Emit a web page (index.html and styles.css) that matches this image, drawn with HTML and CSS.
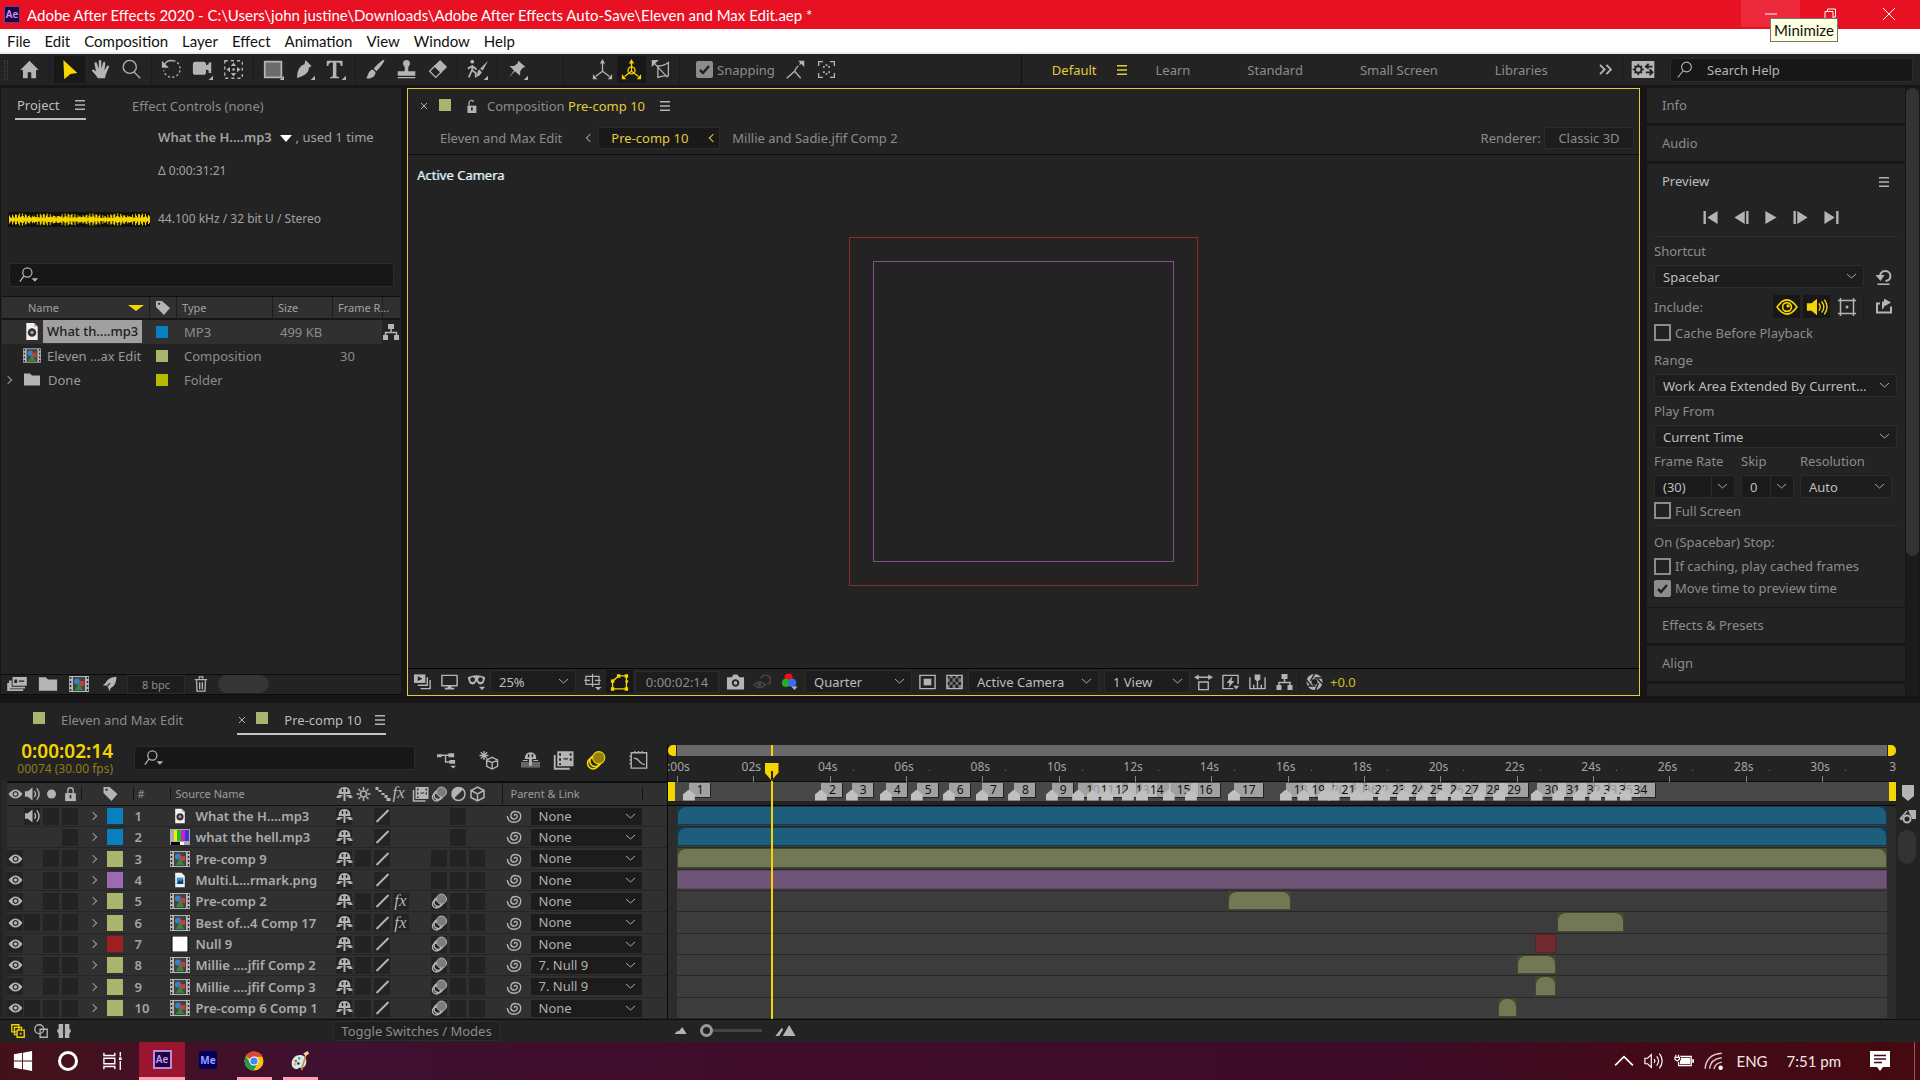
FILE: index.html
```html
<!DOCTYPE html>
<html lang="en">
<head>
<meta charset="utf-8">
<title>Adobe After Effects 2020</title>
<link rel="stylesheet" href="styles.css">
</head>
<body>
<svg class="sprite" aria-hidden="true">
  <symbol id="home" viewBox="0 0 24 24"><path d="M12 2 1.500 12.500H4.500V22H10V15H14V22H19.500V12.500H22.500Z"/></symbol>
  <symbol id="arrow" viewBox="0 0 24 24"><path d="M5 1 21 16 13 17 6 23Z"/></symbol>
  <symbol id="hand" viewBox="0 0 24 24"><path d="M9 22C7 18 4 16 2 13c1-2 3-1 5 1.500L5 5c1-2 2.500-1 3 0l2 6V2c1-1.500 2.500-1 3 0v9l2-7c1-1.500 2.500-.5 2.500 1L16.500 13l3-5c1-1.200 2.500-.4 2.200 1L18 18l-1 4Z"/></symbol>
  <symbol id="zoom" viewBox="0 0 24 24"><g class="line"><circle cx="10" cy="9" r="7.500"/><path d="m15 15 7 7"/></g></symbol>
  <symbol id="rotate" viewBox="0 0 24 24"><g class="line"><path d="M4 6a9.500 9.500 0 0 1 10-4"/><path stroke-dasharray="2.500 2.500" d="M14 2a9.500 9.500 0 1 1-11 11"/></g><path d="M1 2v8h8Z"/></symbol>
  <symbol id="camera" viewBox="0 0 24 24"><path d="M1 6q0-3 3-3h9q3 0 3 3v1l3-1V4h3v12h-3v-3l-3-1v3q0 3-3 3H4q-3 0-3-3Z"/><path d="M24 19v5h-5Z"/></symbol>
  <symbol id="panbehind" viewBox="0 0 24 24"><g class="line"><path stroke-dasharray="3.500 3.500" d="M2 2h20v20H2Z"/></g><path d="m12 4 3 4H9zM12 20l3-4H9zM4 12l4-3v6zM20 12l-4-3v6z"/><circle cx="12" cy="12" r="1.500"/></symbol>
  <symbol id="rect" viewBox="0 0 24 24"><path fill="#6c6c6c" stroke="#b4b4b4" stroke-width="2" d="M2 3h19v18H2Z"/><path d="M24 19v5h-5Z"/></symbol>
  <symbol id="pen" viewBox="0 0 24 24"><path d="m13 1 7 7-3 2c0 6-5 9-14 12L8.500 15a2 2 0 1 1 1.300 1.300L3.500 21C4 13 6 8 12 6Z"/><path d="M24 19v5h-5Z"/></symbol>
  <symbol id="type" viewBox="0 0 24 24"><path d="M2 2h18v6h-2c0-3-1-4-5-4v15q0 1.500 3 1.500V22H6v-1.500q3 0 3-1.500V4C5 4 4 5 4 8H2Z"/><path d="M24 19v5h-5Z"/></symbol>
  <symbol id="brush" viewBox="0 0 24 24"><path d="M22 1c1 1-5 9-9 13l-3-3C14 6 21 0 22 1ZM9 12l3 3c0 5-5 8-11 7 3-2 2-9 8-10Z"/></symbol>
  <symbol id="stamp" viewBox="0 0 24 24"><path d="M8 5a4 4 0 0 1 8 0c0 2-2 3-2 5v4h8v5H2v-5h8v-4c0-2-2-3-2-5ZM2 20.500h20V22H2Z"/></symbol>
  <symbol id="eraser" viewBox="0 0 24 24"><path d="m15 1 8 8-7 7-8-8Z"/><path class="line" d="m9 8 7 7-6 6-7-7Z"/></symbol>
  <symbol id="roto" viewBox="0 0 24 24"><circle cx="6" cy="3" r="2.200"/><path class="line bold" d="M6 7v6l4 3v5M6 12l-4 9M1 11l5-3 5 4"/><path d="M24 2 18 13l-3-2ZM14 12l3 3c-2 3-3 5-7 5 3-2 1-7 4-8ZM24 19v5h-5Z"/></symbol>
  <symbol id="pin" viewBox="0 0 24 24"><path d="m13 2 8 7-3 1-3 4v5L9 14l-7 7 6-8-5-5h5l4-3Z"/><path d="M24 19v5h-5Z"/></symbol>
  <symbol id="axis" viewBox="0 0 24 24"><path class="line" d="M12 4v10L4 20M12 14l8 6"/><path d="m12 0 3 5H9zM1 23v-6l5 6zM23 23v-6l-5 6z"/></symbol>
  <symbol id="axisw" viewBox="0 0 24 24"><path class="line" d="M12 4v10L4 20M12 14l8 6"/><circle class="line" cx="12" cy="13" r="4"/><path d="m12 0 3 5H9zM1 23v-6l5 6zM23 23v-6l-5 6z"/></symbol>
  <symbol id="axisv" viewBox="0 0 24 24"><path class="line" d="M9 8q7 0 12-4v15q-7 0-12 2ZM5 5l15 16"/><path d="M2 1h8l-8 8z"/></symbol>
  <symbol id="snap1" viewBox="0 0 24 24"><path class="line" d="m2 22 9-8 7 8M11 14l2-4"/><path class="line" stroke-dasharray="3 2" d="m13 10 6-6"/><path d="M15 2h7v7z"/></symbol>
  <symbol id="snap2" viewBox="0 0 24 24"><path class="line" d="M3 8V3h5M16 3h5v5M21 16v5h-5M8 21H3v-5"/><path d="M8 8h2v2H8zM14 8h2v2h-2zM8 14h2v2H8zM14 14h2v2h-2zM11 6h2v2h-2zM11 16h2v2h-2z"/></symbol>
  <symbol id="workspace" viewBox="0 0 26 18"><path d="M1 0h24v18H1Z"/><circle cx="8" cy="9" r="3.500" fill="none" stroke="#232323" stroke-width="2"/><path stroke="#232323" stroke-width="1.500" d="M8 3v3M8 12v3M2 9h3M11 9h3M4 5l2 2M10 11l2 2M12 5l-2 2M6 11l-2 2" fill="none"/><path stroke="#232323" stroke-width="2" fill="none" d="M16 6h7M19 3l-3 3 3 2M16 12h7M20 9l3 3-3 3"/></symbol>
  <symbol id="mag" viewBox="0 0 24 24"><g class="line"><circle cx="14" cy="8" r="6.500"/><path d="m9.500 13-7 9"/></g></symbol>
  <symbol id="magdrop" viewBox="0 0 24 24"><g class="line"><circle cx="10" cy="9" r="5.500"/><path d="m6 13-5 7"/></g><path d="M15 16h8l-4 4Z"/></symbol>
  <symbol id="burger" viewBox="0 0 12 12"><path d="M1 1h10v1.500H1zM1 5.200h10v1.500H1zM1 9.500h10V11H1z"/></symbol>
  <symbol id="close" viewBox="0 0 10 10"><path class="line thin" d="m2 2 6 6M8 2 2 8"/></symbol>
  <symbol id="lock" viewBox="0 0 16 18"><path d="M2 8h12v9H2Z"/><path class="line" d="M5 8V5a3 3 0 0 1 6 0v3"/><path fill="#333" d="M7 10h2v4H7z"/></symbol>
  <symbol id="unlock" viewBox="0 0 16 18"><path d="M3 8h11v9H3Z"/><path class="line" d="M5 8V4a3 3 0 0 1 5.500-1"/><path fill="#232323" d="M7.500 10h2v4h-2z"/></symbol>
  <symbol id="tag" viewBox="0 0 16 16"><path fill-rule="evenodd" d="M1 1h6l8 7-6 7-8-8Zm3 1.500a1.200 1.200 0 1 0 .1 0Z"/></symbol>
  <symbol id="audiofile" viewBox="0 0 16 20"><path fill="#f2f2f2" d="M2 1h8l4 4v14H2Z"/><circle cx="8" cy="11" r="4.500" fill="#333"/><circle cx="8" cy="11" r="1.800" fill="#d88"/><path fill="#bbb" d="M10 1v4h4z"/></symbol>
  <symbol id="imagefile" viewBox="0 0 16 20"><path fill="#f2f2f2" d="M2 1h8l4 4v14H2Z"/><path fill="#3b8fd6" d="M4 7h8v8H4Z"/><path fill="#0c3f73" d="m4 15 3-5 2 2 3-3v6Z"/></symbol>
  <symbol id="compfile" viewBox="0 0 20 16"><path fill="#b4b4b4" d="M0 0h20v16H0Z"/><path fill="none" stroke="#2a2a2a" stroke-width="1.500" stroke-dasharray="2 2" d="M1.500 1v14M18.500 1v14"/><path fill="#444" d="M4 1h12v14H4Z"/><circle cx="8" cy="5.500" r="3" fill="#3a80c4"/><path fill="#c43c3c" d="M10 5h5v5h-5z"/><path fill="#2e8b3d" d="m10 7 4 7H6Z"/></symbol>
  <symbol id="bars" viewBox="0 0 20 16"><path fill="#aaa" d="M0 0h20v16H0Z"/><path fill="#ee0" d="M4 1h3v11H4z"/><path fill="#2b2" d="M7 1h4v11H7z"/><path fill="#c2c" d="M11 1h4v11h-4z"/><path fill="#43d" d="M15 1h4v11h-4z"/><path fill="#000" d="M1 13h9v3H1z"/><path fill="#fff" d="M10 13h4v3h-4z"/></symbol>
  <symbol id="solid" viewBox="0 0 20 16"><path fill="#fff" stroke="#000" d="M2 0h16v16H2Z"/></symbol>
  <symbol id="folder" viewBox="0 0 18 14"><path d="M1 1h6l2 2h8v10H1Z"/></symbol>
  <symbol id="flow" viewBox="0 0 18 18"><path d="M6 1h6v5H6zM1 12h5v5H1zM12 12h5v5h-5z"/><path class="line" d="M9 6v4M3.500 12V9.500h11V12"/></symbol>
  <symbol id="interpret" viewBox="0 0 24 18"><path d="M1 8h3v7h15v2H1zM3 5h3v7h15v2H3z"/><path fill-rule="evenodd" d="M7 1h16v10H7Zm2 3v4h3V4Zm5 1v1.500h6V5Z"/></symbol>
  <symbol id="rocket" viewBox="0 0 20 20"><path d="M18 1c0 8-3 12-7 14l-2 4-1-4-3-3-4 0 4-4C7 4 10 2 18 1Z"/><path stroke="#232323" stroke-width="1.500" fill="none" d="m2 18 8-9"/></symbol>
  <symbol id="trash" viewBox="0 0 16 18"><path class="line" d="M1 4h14M6 3V1h4v2M3 5l.5 12h9L13 5M6.500 7v8M9.500 7v8"/></symbol>
  <symbol id="stack" viewBox="0 0 20 18"><path d="M1 1h12v9H1Z"/><path fill="#232323" d="m5 3 5 2.500-5 2.500z"/><path class="line" d="M15 4v8.500H5M18 7v9H8"/></symbol>
  <symbol id="monitor" viewBox="0 0 20 18"><path class="line" d="M2 2h16v11H2Z"/><path d="M8 13h4v2h3v2H5v-2h3z"/></symbol>
  <symbol id="mask" viewBox="0 0 24 22"><path fill-rule="evenodd" d="M1 5q11-5 22 0-1 9-6 9-3 0-5-4-2 4-5 4Q2 14 1 5Zm6 0a3 3 0 1 0 .1 0Zm10 0a3 3 0 1 0 .1 0Z"/><path d="M15 17h8l-4 4z"/></symbol>
  <symbol id="guides" viewBox="0 0 22 22"><path class="line" d="M3 4h16v10H3ZM11 1v16M1 9h7M14 9h7"/><path d="M14 17h8l-4 4z"/></symbol>
  <symbol id="poly" viewBox="0 0 22 20"><path class="line" d="M3 18V9l7-6h9v15Z"/><path d="M1 7h4v4H1zM8 1h4v4H8zM17 1h4v4h-4zM17 16h4v4h-4zM1 16h4v4H1zM18 8h3v3h-3z"/></symbol>
  <symbol id="snapshot" viewBox="0 0 20 18"><path fill-rule="evenodd" d="M1 4h5l2-3h4l2 3h5v13H1Zm9 2a4 4 0 1 0 .1 0Z"/><circle cx="10" cy="10" r="2"/></symbol>
  <symbol id="ghost" viewBox="0 0 20 18"><path class="line" d="M1 12q6-6 12 0-6 6-12 0ZM8 5q5-6 10-1v6l-3 1"/><circle cx="7" cy="12" r="2"/></symbol>
  <symbol id="rgb" viewBox="0 0 18 20"><circle cx="8" cy="5" r="4.500" fill="#f01010"/><circle cx="5" cy="11" r="4.500" fill="#20b020"/><circle cx="12" cy="11" r="4.500" fill="#3c6cf0"/><path d="M11 15h7l-3.500 4z"/></symbol>
  <symbol id="roi" viewBox="0 0 20 18"><path class="line" d="M2 2h16v14H2Z"/><path d="M6 5.500h8v7H6z"/></symbol>
  <symbol id="checker" viewBox="0 0 20 18"><path fill="#777" d="M2 2h16v14H2Z"/><path fill="#222" d="M2 2h3v3H2zM8 2h3v3H8zM14 2h3v3h-3zM5 5h3v4H5zM11 5h3v4h-3zM2 9h3v3H2zM8 9h3v3H8zM14 9h3v3h-3zM5 12h3v4H5zM11 12h3v4h-3z"/><path class="line" d="M2 2h16v14H2Z"/></symbol>
  <symbol id="aspect" viewBox="0 0 20 18"><path class="line" d="M3 4h14M5 9h10v8H5Z"/><path d="m0 4 5-3v6zM20 4l-5-3v6z"/></symbol>
  <symbol id="fast" viewBox="0 0 20 18"><path class="line" d="M13 16H2V2h16v9"/><path d="m12 3-6 7h3l-1 5 6-7h-3zM13 13h6l-3 4z"/></symbol>
  <symbol id="tlgraph" viewBox="0 0 20 18"><path class="line" d="M2 4v12h16V4M6 12v4M10 9v7M14 12v4"/><path d="M7 1h6v5l-3 3-3-3z"/></symbol>
  <symbol id="aperture" viewBox="0 0 18 18"><circle cx="9" cy="9" r="8"/><path stroke="#232323" stroke-width="1.500" fill="none" d="M9 1 5 8M16 5H9M17 11l-5-5M10 17l3-7M2 13h8M1 7l5 6"/><circle cx="9" cy="9" r="3" fill="#232323"/></symbol>
  <symbol id="first" viewBox="0 0 18 16"><path d="M1 1h2.500v14H1zM16 1v14L5 8z"/></symbol>
  <symbol id="prev" viewBox="0 0 18 16"><path d="M14.500 1H17v14h-2.500zM13 1v14L2 8z"/></symbol>
  <symbol id="play" viewBox="0 0 18 16"><path d="M3 1v14l12-7z"/></symbol>
  <symbol id="next" viewBox="0 0 18 16"><path d="M1 1h2.500v14H1zM5 1v14l11-7z"/></symbol>
  <symbol id="last" viewBox="0 0 18 16"><path d="M14.500 1H17v14h-2.500zM2 1v14l11-7z"/></symbol>
  <symbol id="reset" viewBox="0 0 18 18"><path class="line bold" d="M11 13c7-1 6-10 0-10-4 0-6 3-5 6"/><path d="M1 7h9l-4 6zM3 15.500h12V17H3z"/></symbol>
  <symbol id="eyeball" viewBox="0 0 20 16"><path class="line" d="M1 8q9-13 18 0-9 13-18 0Z"/><circle class="line" cx="10" cy="8" r="4"/><circle cx="11" cy="7" r="1.500"/></symbol>
  <symbol id="sound" viewBox="0 0 24 20"><path d="M1 6h5l6-5v18l-6-5H1Z"/><path class="line" d="M14 6q3 4 0 8M17 4q5 6 0 12M20 2q6 8 0 16"/></symbol>
  <symbol id="overlay" viewBox="0 0 20 20"><path class="line" d="M3.500 1v18M16.500 1v18M1 3.500h18M1 16.500h18"/><circle cx="10" cy="10" r="1.500"/></symbol>
  <symbol id="export" viewBox="0 0 18 16"><path class="line bold" d="M5 5H2v9h14V8"/><path d="M7 11V3h2V0l7 4-7 4v1Z"/></symbol>
  <symbol id="eye" viewBox="0 0 16 16"><path fill-rule="evenodd" d="M1 8q7-9 14 0-7 9-14 0Zm7-3a3 3 0 1 0 .1 0Z"/><circle cx="8" cy="8" r="1.800"/></symbol>
  <symbol id="speaker" viewBox="0 0 18 16"><path d="M1 5h3l5-4v14l-5-4H1Z"/><path class="line" d="M11 5q2.500 3 0 6M13.500 2q5 6 0 12"/></symbol>
  <symbol id="dot" viewBox="0 0 16 16"><circle cx="8" cy="8" r="4.500"/></symbol>
  <symbol id="shy" viewBox="0 0 16 16"><path d="M2 8q0-7 6-7t6 7Z"/><path stroke="#232323" stroke-width="1.500" d="M6 3v3M10 3v3" fill="none"/><path d="M7 8h2v7H7zM1 9h5v1.500H4V12H0v-1.500h1zM15 9h-5v1.500h2V12h4v-1.500h-1z"/></symbol>
  <symbol id="sun" viewBox="0 0 16 16"><circle class="line" cx="8" cy="8" r="3"/><path class="line" d="M8 1v3M8 12v3M1 8h3M12 8h3M3 3l2 2M11 11l2 2M13 3l-2 2M5 11l-2 2"/></symbol>
  <symbol id="dots" viewBox="0 0 16 16"><path d="M1 1h3v3H1zM4 4h3v2H4zM7 7h3v2H7zM10 9h3v3h-3zM12 12h4v3h-4z"/></symbol>
  <symbol id="slash" viewBox="0 0 16 16"><path class="line bold" d="M2 14 14 2"/></symbol>
  <symbol id="film" viewBox="0 0 16 16"><path fill-rule="evenodd" d="M3 1h13v12H3Zm1.500 1.500v2h1.500v-2Zm0 4v2h1.500v-2Zm0 4v1.500h1.500v-1.500ZM13 2.500v2h1.500v-2Zm0 4v2h1.500v-2Zm-5 0v1h3.500v-1Z"/><path class="line" d="M1 4v11h12"/></symbol>
  <symbol id="blur" viewBox="0 0 16 16"><g class="line"><circle cx="5" cy="11" r="4"/><circle cx="7" cy="9" r="4.500"/></g><circle cx="10" cy="6" r="5" fill="#7c7c7c" stroke="#b4b4b4"/></symbol>
  <symbol id="blury" viewBox="0 0 18 18"><g class="line"><circle cx="6" cy="12" r="5"/><circle cx="8" cy="10" r="5"/></g><circle cx="11" cy="7" r="5.500" fill="#96810a" stroke="#f5d400"/></symbol>
  <symbol id="adjust" viewBox="0 0 16 16"><circle class="line" cx="8" cy="8" r="6.500"/><path d="M3.400 12.600A6.500 6.500 0 0 1 12.600 3.400Z"/></symbol>
  <symbol id="cube" viewBox="0 0 16 16"><path class="line" d="m8 1 6.500 3.500v7L8 15l-6.500-3.500v-7ZM1.500 4.500 8 8l6.500-3.500M8 8v7"/></symbol>
  <symbol id="spiral" viewBox="0 0 18 18"><path class="line" d="M9 9c-1-3 4-2 3 1-1 4-8 3-7-2 1-6 11-5 11 1 0 5-3 7-8 7-4 0-7-3-7-7"/></symbol>
  <symbol id="tree" viewBox="0 0 22 20"><path d="M1 4h5v3H1zM13 3h6v4h-6zM14 10h6v4h-6zM15 16h6l-3 3z"/><path class="line" d="M5 5h9M10 5v7h5"/></symbol>
  <symbol id="draft3d" viewBox="0 0 22 22"><g class="line"><path d="m15 8 6 3v7l-6 3-6-3v-7ZM9 11l6 3 6-3M15 14v7"/><path d="M6 1v10M1 6h10M2.500 2.500l7 7M9.500 2.500l-7 7"/></g></symbol>
  <symbol id="shybig" viewBox="0 0 22 18"><path fill="#666" d="M1 11h20v6H1z"/><path d="M5 8q0-7 6-7t6 7Z"/><path stroke="#232323" stroke-width="1.500" d="M9 3v3M13 3v3" fill="none"/><path d="M9.500 8h3v7h-3zM3 9h5v1H3zM19 9h-5v1h5z"/></symbol>
  <symbol id="graph" viewBox="0 0 22 22"><path class="line" d="M3 3h17v17H3ZM1 7h2M1 11h2M1 15h2M7 3V1M11 3V1M15 3V1M6 9c7 0 5 7 12 7"/></symbol>
  <symbol id="marker" viewBox="0 0 14 18"><path d="M1 1h12v11l-6 5-6-5Z"/></symbol>
  <symbol id="compbtn" viewBox="0 0 18 18"><path d="M9 3h8v9h-4z"/><path class="line" d="M1 12 8 4M1 12h4"/><circle cx="8" cy="12" r="3.500" fill="#232323" stroke="#b4b4b4" stroke-width="2"/></symbol>
  <symbol id="pane1" viewBox="0 0 18 18"><path class="line" d="M2 2h8v8H2ZM5 5h8v8H5Z"/><path fill="#232323" stroke="#f5d400" stroke-width="1.500" d="M8 8h8v8H8Z"/><path d="M11 11h2v2h-2z"/></symbol>
  <symbol id="pane2" viewBox="0 0 18 18"><circle class="line" cx="7" cy="7" r="5"/><path class="line" d="M8 7h8v9H8Z"/></symbol>
  <symbol id="pane3" viewBox="0 0 18 18"><path d="M3 1h5v16H3v-5L1 9l2-3zM15 1h-5v16h5v-5l2-3-2-3z"/></symbol>
  <symbol id="hill" viewBox="0 0 14 8"><path d="m0 8 4-4 1 1 4-5 5 8Z"/></symbol>
  <symbol id="hills" viewBox="0 0 22 12"><path d="m8 12 7-12 7 12ZM0 12 7 3l1.500 2L4 12Z"/></symbol>
  <symbol id="win" viewBox="0 0 20 22"><path d="M0 3.500 9 2v8.500H0zM10 1.800 20 0v10.500H10zM0 11.500h9V20l-9-1.500zM10 11.500h10V22l-10-1.800z"/></symbol>
  <symbol id="taskview" viewBox="0 0 22 20"><path fill="none" stroke="#fff" stroke-width="1.500" d="M1 1v3h12V1M1 19v-3h12v3M1 7h12v6H1ZM19 0v5M19 10v10"/><path d="M17.500 6h3v3h-3z"/></symbol>
  <symbol id="chrome" viewBox="0 0 20 20"><circle cx="10" cy="10" r="9.500" fill="#fbc116"/><path fill="#dc4437" d="M10 10 1.800 5.200A9.500 9.500 0 0 1 18.500 5.800H10Z"/><path fill="#1a9c52" d="M1.800 5.200A9.500 9.500 0 0 0 9.500 19.500L14 12 6 12Z"/><circle cx="10" cy="10" r="4.600" fill="#fff"/><circle cx="10" cy="10" r="3.600" fill="#4285f4"/></symbol>
  <symbol id="paint" viewBox="0 0 22 24"><path fill="#d6e8f2" d="M1 15C1 8 7 4 13 5s7 9 4 13-6 1-8 3-8 0-8-6Z"/><circle cx="6" cy="12" r="1.600" fill="#d44"/><circle cx="10" cy="9" r="1.600" fill="#4a4"/><circle cx="5" cy="16" r="1.600" fill="#e8b43a"/><circle cx="9" cy="15" r="1.600" fill="#234"/><path fill="none" stroke="#c98a3a" stroke-width="2" d="M18 3c0 7-4 12-5 20"/><path fill="#f0cfa0" d="m15 3 5-3 2 3-4 3z"/></symbol>
  <symbol id="tray-up" viewBox="0 0 18 10"><path fill="none" stroke="#fff" stroke-width="1.500" d="m1 9 8-8 8 8"/></symbol>
  <symbol id="tray-vol" viewBox="0 0 22 18"><path fill="none" stroke="#fff" stroke-width="1.300" d="M1 6h3l4-4v14l-4-4H1ZM11 7q2 2 0 4M14 4q4 5 0 10M17 1q6 8 0 16"/></symbol>
  <symbol id="tray-bat" viewBox="0 0 22 16"><path fill="none" stroke="#fff" stroke-width="1.300" d="M7 3h12v10H5V9M2 1v3M5 1v3M1 4h5v2L3.500 8 1 6Z"/><path d="M7.500 4.500H18v7H6.500V8l1-1zM20 6h2v4h-2z"/></symbol>
  <symbol id="tray-net" viewBox="0 0 18 18"><path fill="none" stroke="#e9c9cf" stroke-width="1.300" d="M1 16Q2 3 16 2M5 16q1-9 11-10M9 16q1-5 7-6"/><circle cx="15" cy="15" r="2"/></symbol>
  <symbol id="tray-note" viewBox="0 0 20 20"><path d="M0 0h20v16h-7l-3 4-3-4H0Z"/><path stroke="#450a14" stroke-width="1.300" d="M4 4.500h12M4 8h12M4 11.500h8"/></symbol>
</svg>

<header class="titlebar">
  <span class="ae-logo">Ae</span>
  <h1>Adobe After Effects 2020 - C:\Users\john justine\Downloads\Adobe After Effects Auto-Save\Eleven and Max Edit.aep *</h1>
  <div class="window-buttons">
    <button class="minimize" aria-label="Minimize"><svg viewBox="0 0 12 12"><path d="M0 6h12"/></svg><span class="tooltip">Minimize</span></button>
    <button aria-label="Restore"><svg viewBox="0 0 12 12"><path d="M1 3.500h8v8H1ZM3.500 3V1H11.500V9H9"/></svg></button>
    <button aria-label="Close"><svg viewBox="0 0 12 12"><path d="m0 0 12 12M12 0 0 12"/></svg></button>
  </div>
</header>

<nav class="menubar">
  <button>File</button><button>Edit</button><button>Composition</button><button>Layer</button><button>Effect</button><button>Animation</button><button>View</button><button>Window</button><button>Help</button>
</nav>

<div class="toolbar">
  <i class="grip"></i>
  <button class="tool" aria-label="Home"><svg><use href="#home"/></svg></button>
  <i class="sep"></i>
  <button class="tool active" aria-label="Selection"><svg><use href="#arrow"/></svg></button>
  <button class="tool" aria-label="Hand"><svg><use href="#hand"/></svg></button>
  <button class="tool" aria-label="Zoom"><svg><use href="#zoom"/></svg></button>
  <i class="sep"></i>
  <button class="tool" aria-label="Rotation"><svg><use href="#rotate"/></svg></button>
  <button class="tool" aria-label="Camera"><svg><use href="#camera"/></svg></button>
  <button class="tool" aria-label="Pan behind"><svg><use href="#panbehind"/></svg></button>
  <i class="sep"></i>
  <button class="tool" aria-label="Rectangle"><svg><use href="#rect"/></svg></button>
  <button class="tool" aria-label="Pen"><svg><use href="#pen"/></svg></button>
  <button class="tool" aria-label="Type"><svg><use href="#type"/></svg></button>
  <i class="sep"></i>
  <button class="tool" aria-label="Brush"><svg><use href="#brush"/></svg></button>
  <button class="tool" aria-label="Clone stamp"><svg><use href="#stamp"/></svg></button>
  <button class="tool" aria-label="Eraser"><svg><use href="#eraser"/></svg></button>
  <i class="sep"></i>
  <button class="tool" aria-label="Roto brush"><svg><use href="#roto"/></svg></button>
  <i class="sep"></i>
  <button class="tool" aria-label="Puppet pin"><svg><use href="#pin"/></svg></button>
  <i class="sep wide"></i>
  <button class="tool axis" aria-label="Local axis"><svg><use href="#axis"/></svg></button>
  <button class="tool axis active" aria-label="World axis"><svg><use href="#axisw"/></svg></button>
  <button class="tool axis" aria-label="View axis"><svg><use href="#axisv"/></svg></button>
  <i class="sep"></i>
  <label class="check snapping"><input type="checkbox" checked>Snapping</label>
  <button class="tool" aria-label="Snap edges"><svg><use href="#snap1"/></svg></button>
  <button class="tool" aria-label="Snap features"><svg><use href="#snap2"/></svg></button>
  <div class="workspaces">
    <button class="current">Default <svg><use href="#burger"/></svg></button>
    <button>Learn</button><button>Standard</button><button>Small Screen</button><button>Libraries</button>
  </div>
  <button class="more" aria-label="More workspaces"><svg viewBox="0 0 14 12"><path class="line bold" d="m1 1 5 5-5 5M8 1l5 5-5 5"/></svg></button>
  <i class="sep"></i>
  <button class="sync" aria-label="Workspace settings"><svg><use href="#workspace"/></svg></button>
  <div class="search help"><svg><use href="#mag"/></svg><input type="text" placeholder="Search Help" aria-label="Search Help"></div>
</div>

<main class="workspace">
  <section class="panel project">
    <div class="tabs">
      <button class="tab on">Project <svg><use href="#burger"/></svg></button>
      <button class="tab">Effect Controls (none)</button>
    </div>
    <div class="asset">
      <p class="asset-name"><b>What the H....mp3</b> <i class="tri"></i> , used 1 time</p>
      <p class="small">Δ 0:00:31:21</p>
      <svg class="wave" viewBox="0 0 143 15" preserveAspectRatio="none"><path id="wave"/></svg>
      <p class="small">44.100 kHz / 32 bit U / Stereo</p>
    </div>
    <div class="search"><svg><use href="#magdrop"/></svg><input type="text" aria-label="Search project"></div>
    <table class="files">
      <colgroup><col class="c-name"><col class="c-tag"><col class="c-type"><col class="c-size"><col class="c-rate"><col></colgroup>
      <thead><tr><th><span class="sort">Name <i class="tri"></i></span></th><th><svg><use href="#tag"/></svg></th><th>Type</th><th>Size</th><th>Frame R...</th><th></th></tr></thead>
      <tbody>
        <tr class="picked"><td><span class="file"><svg class="doc"><use href="#audiofile"/></svg><span class="label">What th....mp3</span></span></td><td><i class="chip blue"></i></td><td>MP3</td><td>499 KB</td><td></td><td class="flow"><svg><use href="#flow"/></svg></td></tr>
        <tr><td><span class="file"><svg class="wide"><use href="#compfile"/></svg><span class="label">Eleven ...ax Edit</span></span></td><td><i class="chip green"></i></td><td>Composition</td><td></td><td>30</td><td></td></tr>
        <tr><td><span class="file folder"><i class="chev"></i><svg class="wide"><use href="#folder"/></svg><span class="label">Done</span></span></td><td><i class="chip lime"></i></td><td>Folder</td><td></td><td></td><td></td></tr>
      </tbody>
    </table>
    <div class="project-foot">
      <button aria-label="Interpret footage"><svg><use href="#interpret"/></svg></button>
      <button aria-label="New folder"><svg><use href="#folder"/></svg></button>
      <button aria-label="New composition"><svg><use href="#compfile"/></svg></button>
      <button aria-label="Project settings"><svg><use href="#rocket"/></svg></button>
      <button class="bpc">8 bpc</button>
      <button aria-label="Delete"><svg><use href="#trash"/></svg></button>
      <i class="pill"></i>
    </div>
  </section>

  <section class="panel viewer">
    <div class="viewer-tabs">
      <svg class="x"><use href="#close"/></svg><i class="chip green"></i><svg class="lock"><use href="#unlock"/></svg>
      <span>Composition <em>Pre-comp 10</em></span><svg class="burger"><use href="#burger"/></svg>
    </div>
    <div class="crumbs">
      <a href="#main">Eleven and Max Edit</a><i class="chev left"></i>
      <a href="#pre" class="here">Pre-comp 10 <i class="chev left"></i></a>
      <a href="#millie">Millie and Sadie.jfif Comp 2</a>
      <span class="renderer">Renderer: <button>Classic 3D</button></span>
    </div>
    <div class="stage">
      <span class="cam">Active Camera</span>
      <div class="frame"><div class="inner"></div></div>
    </div>
    <div class="viewer-foot">
      <button class="ib" aria-label="Preview always"><svg><use href="#stack"/></svg></button>
      <button class="ib" aria-label="Primary viewer"><svg><use href="#monitor"/></svg></button>
      <button class="ib" aria-label="VR"><svg><use href="#mask"/></svg></button>
      <select class="w-zoom" aria-label="Magnification"><option>25%</option></select>
      <button class="ib" aria-label="Guides"><svg><use href="#guides"/></svg></button>
      <button class="ib active" aria-label="Mask visibility"><svg><use href="#poly"/></svg></button>
      <button class="time">0:00:02:14</button>
      <button class="ib" aria-label="Snapshot"><svg><use href="#snapshot"/></svg></button>
      <button class="ib faint" aria-label="Show snapshot"><svg><use href="#ghost"/></svg></button>
      <button class="ib" aria-label="Channels"><svg><use href="#rgb"/></svg></button>
      <select class="w-quality" aria-label="Resolution"><option>Quarter</option></select>
      <button class="ib" aria-label="Region of interest"><svg><use href="#roi"/></svg></button>
      <button class="ib" aria-label="Transparency"><svg><use href="#checker"/></svg></button>
      <select class="w-camera" aria-label="3D view"><option>Active Camera</option></select>
      <select class="w-view" aria-label="View layout"><option>1 View</option></select>
      <button class="ib" aria-label="Pixel aspect"><svg><use href="#aspect"/></svg></button>
      <button class="ib" aria-label="Fast previews"><svg><use href="#fast"/></svg></button>
      <button class="ib" aria-label="Timeline"><svg><use href="#tlgraph"/></svg></button>
      <button class="ib" aria-label="Flowchart"><svg><use href="#flow"/></svg></button>
      <i class="sep"></i>
      <button class="ib" aria-label="Exposure"><svg><use href="#aperture"/></svg></button>
      <span class="exposure">+0.0</span>
    </div>
  </section>

  <aside class="side">
    <div class="stacked">
      <section class="card"><h2>Info</h2></section>
      <section class="card"><h2>Audio</h2></section>
      <section class="card preview">
        <h2 class="on">Preview <svg><use href="#burger"/></svg></h2>
        <div class="transport">
          <button aria-label="First frame"><svg><use href="#first"/></svg></button><button aria-label="Previous frame"><svg><use href="#prev"/></svg></button><button aria-label="Play"><svg><use href="#play"/></svg></button><button aria-label="Next frame"><svg><use href="#next"/></svg></button><button aria-label="Last frame"><svg><use href="#last"/></svg></button>
        </div>
        <div class="controls">
          <label class="cap" for="shortcut">Shortcut</label>
          <div class="line-row"><select id="shortcut"><option>Spacebar</option></select><button class="ib" aria-label="Reset"><svg><use href="#reset"/></svg></button></div>
          <div class="line-row include"><span>Include:</span>
            <button class="ib active" aria-label="Video"><svg><use href="#eyeball"/></svg></button><button class="ib active" aria-label="Audio"><svg><use href="#sound"/></svg></button><button class="ib" aria-label="Overlays"><svg><use href="#overlay"/></svg></button><button class="ib out" aria-label="Loop"><svg><use href="#export"/></svg></button></div>
          <label class="check"><input type="checkbox">Cache Before Playback</label>
          <label class="cap range" for="range">Range</label>
          <select id="range"><option>Work Area Extended By Current...</option></select>
          <label class="cap" for="from">Play From</label>
          <select id="from"><option>Current Time</option></select>
          <div class="trio">
            <label for="rate">Frame Rate</label><label for="skip">Skip</label><label for="res">Resolution</label>
            <select id="rate" class="split"><option>(30)</option></select>
            <select id="skip" class="split"><option>0</option></select>
            <select id="res"><option>Auto</option></select>
          </div>
          <label class="check"><input type="checkbox">Full Screen</label>
          <p class="stop">On (Spacebar) Stop:</p>
          <label class="check"><input type="checkbox">If caching, play cached frames</label>
          <label class="check"><input type="checkbox" checked>Move time to preview time</label>
        </div>
      </section>
      <section class="card tight"><h2>Effects &amp; Presets</h2></section>
      <section class="card"><h2>Align</h2></section>
      <section class="card rest"></section>
    </div>
    <div class="scroll"><i></i></div>
  </aside>
</main>

<section class="timeline">
  <div class="tl-left">
    <div class="tl-tabs">
      <button class="tl-tab"><i class="chip green"></i>Eleven and Max Edit</button>
      <button class="tl-tab on"><svg class="x"><use href="#close"/></svg><i class="chip green"></i>Pre-comp 10<svg class="burger"><use href="#burger"/></svg></button>
    </div>
    <div class="tl-tools">
      <div class="clock"><strong>0:00:02:14</strong><span>00074 (30.00 fps)</span></div>
      <div class="search"><svg><use href="#magdrop"/></svg><input type="text" aria-label="Search layers"></div>
      <div class="tl-icons">
        <button aria-label="Mini-flowchart"><svg><use href="#tree"/></svg></button>
        <button aria-label="Draft 3D"><svg><use href="#draft3d"/></svg></button>
        <button aria-label="Hide shy layers"><svg><use href="#shybig"/></svg></button>
        <button class="near" aria-label="Frame blending"><svg><use href="#film"/></svg></button>
        <button class="yellow" aria-label="Motion blur"><svg><use href="#blury"/></svg></button>
        <button aria-label="Graph editor"><svg><use href="#graph"/></svg></button>
      </div>
    </div>
    <table class="layers">
      <colgroup><col class="sw"><col class="sw"><col class="sw"><col class="sw"><col class="l-chev"><col class="l-chip"><col class="l-num"><col class="l-icon"><col class="l-name"><col class="sw"><col class="sw"><col class="sw"><col class="sw"><col class="sw"><col class="sw"><col class="sw"><col class="sw"><col class="l-link"><col class="l-parent"><col></colgroup>
      <thead><tr>
        <th><svg><use href="#eye"/></svg></th><th><svg><use href="#speaker"/></svg></th><th><svg><use href="#dot"/></svg></th><th><svg><use href="#lock"/></svg></th>
        <th class="div tagcol" colspan="2"><svg><use href="#tag"/></svg></th><th class="num div">#</th><th colspan="2" class="div source">Source Name</th>
        <th><svg><use href="#shy"/></svg></th><th><svg><use href="#sun"/></svg></th><th><svg><use href="#dots"/></svg></th><th><i class="fx">fx</i></th><th><svg><use href="#film"/></svg></th><th><svg><use href="#blur"/></svg></th><th><svg><use href="#adjust"/></svg></th><th><svg><use href="#cube"/></svg></th>
        <th colspan="2" class="parent"><span>Parent &amp; Link</span></th><th class="div"></th>
      </tr></thead>
      <tbody id="layers"></tbody>
    </table>
  </div>

  <div class="tl-right">
    <div class="graph">
      <div class="navigator"><i></i></div>
      <div class="scale ruler" id="ruler"></div>
      <div class="strip"><div class="scale" id="markers"></div></div>
      <div class="tracks"><div class="scale rows" id="tracks"></div></div>
      <div class="scale head"><i class="playhead"></i></div>
    </div>
    <div class="tl-scroll">
      <button aria-label="Marker bin"><svg><use href="#marker"/></svg></button>
      <button aria-label="Comp button"><svg><use href="#compbtn"/></svg></button>
      <i></i>
    </div>
  </div>

  <div class="tl-foot">
    <button class="yellow" aria-label="Layer switches pane"><svg><use href="#pane1"/></svg></button>
    <button aria-label="Transfer controls pane"><svg><use href="#pane2"/></svg></button>
    <button aria-label="In and out pane"><svg><use href="#pane3"/></svg></button>
    <button class="toggle">Toggle Switches / Modes</button>
    <div class="zoomer"><svg class="s"><use href="#hill"/></svg><input type="range" min="0" max="100" value="0" aria-label="Zoom"><svg class="l"><use href="#hills"/></svg></div>
  </div>
</section>

<footer class="taskbar">
  <button aria-label="Start"><svg><use href="#win"/></svg></button>
  <button aria-label="Cortana"><i class="ring"></i></button>
  <button aria-label="Task view"><svg><use href="#taskview"/></svg></button>
  <button class="app current" aria-label="After Effects"><span class="ae-logo">Ae</span></button>
  <button class="app" aria-label="Media Encoder"><span class="me-logo">Me</span></button>
  <button class="app open" aria-label="Chrome"><svg><use href="#chrome"/></svg></button>
  <button class="app open" aria-label="Paint"><svg><use href="#paint"/></svg></button>
  <div class="tray">
    <svg><use href="#tray-up"/></svg><svg><use href="#tray-vol"/></svg><svg><use href="#tray-bat"/></svg><svg><use href="#tray-net"/></svg>
    <span class="lang">ENG</span><time>7:51 pm</time><svg class="note"><use href="#tray-note"/></svg><i class="peek"></i>
  </div>
</footer>
<script src="timeline.js"></script>
</body>
</html>
```
FILE: styles.css
```css
* { box-sizing: border-box; }
:root {
  --bg: #232323; --dark: #161616; --well: #1b1b1b;
  --text: #8c8c8c; --bright: #bdbdbd; --icon: #b4b4b4; --yellow: #f5d400;
  --arrow: url("data:image/svg+xml,%3Csvg xmlns='http://www.w3.org/2000/svg' width='11' height='7'%3E%3Cpath fill='none' stroke='%23aaa' d='m1 1 4.500 4 4.500-4'/%3E%3C/svg%3E") no-repeat right 6px center;
}
body {
  margin: 0; min-height: 100vh; display: flex; flex-direction: column;
  background: var(--dark); color: var(--text);
  font: 13px/18px "Noto Sans", "Open Sans", sans-serif;
}
button, input, select { font: inherit; color: inherit; background: none; border: 0; padding: 0; margin: 0; }
p, h1, h2 { margin: 0; font: inherit; }
a { color: inherit; text-decoration: none; }
em { font-style: normal; color: #e3cb3c; }
svg { display: block; fill: var(--icon); flex: none; }
.sprite { position: absolute; width: 0; height: 0; }
.line { fill: none; stroke: var(--icon); stroke-width: 1.5; }
.bold { stroke-width: 2; }
.thin { stroke-width: 1; }
.active, .yellow { --icon: var(--yellow); }
.sep { width: 1px; align-self: stretch; background: #191919; flex: none; }
.tri { display: inline-block; border: 6px solid transparent; border-top: 7px solid #fff; border-bottom: 0; }
.chip { display: block; width: 12px; height: 12px; flex: none; }
.green { background: #abb46e; }
.blue { background: #0780c0; }
.lime { background: #b9b900; }
.purple { background: #9c69b3; }
.red { background: #a01d22; }
.chev { display: block; width: 6px; height: 6px; border: solid #9a9a9a; border-width: 1px 1px 0 0; rotate: 45deg; }
.chev.left { rotate: 225deg; }

.titlebar { display: flex; align-items: center; height: 29px; padding-left: 4px; background: #e81123; color: #fff; font: 15px/20px Lato, sans-serif; }
.titlebar h1 { margin-left: 7px; flex: 1; }
.ae-logo { width: 16px; height: 17px; background: #1f0540; color: #c79bf2; border: 1px solid #6d3a8c; font: 600 10px/14px "Noto Sans", sans-serif; text-align: center; }
.window-buttons { display: flex; align-self: stretch; margin-right: 2px; }
.window-buttons button { width: 59px; height: 27px; display: grid; place-items: center; position: relative; }
.window-buttons svg { width: 12px; height: 12px; fill: none; stroke: #fff; overflow: visible; }
.minimize { background: #ec2a3c; }
.tooltip { position: absolute; left: 29px; top: 18px; z-index: 5; padding: 1px 3px; background: #ffffe1; border: 1px solid #767676; color: #111; font: 15px/20px Lato, sans-serif; }

.menubar { display: flex; gap: 14px; height: 25px; padding-left: 7px; background: #fff; color: #111; border-bottom: 2px solid #ececec; font: 15px/24px Lato, sans-serif; }

.toolbar { display: flex; align-items: center; height: 31px; background: var(--bg); margin-bottom: 3px; }
.toolbar .sep { margin: 2px 4px; }
.grip { width: 4px; height: 20px; margin: 0 6px 0 4px; border: dotted #444; border-width: 0 1px; }
.tool { width: 31px; height: 27px; display: grid; place-items: center; flex: none; }
.tool svg { width: 21px; height: 21px; }
.tool.active { background: #181818; }
.tool.axis { width: 29px; }
.toolbar .wide { margin: 0 24px 0 30px; }
.check { display: flex; align-items: center; gap: 4px; }
.check input { appearance: none; width: 17px; height: 17px; border: 2px solid #8c8c8c; flex: none; }
.check input:checked { background: #8c8c8c url("data:image/svg+xml,%3Csvg xmlns='http://www.w3.org/2000/svg' viewBox='0 0 13 13'%3E%3Cpath fill='none' stroke='%23222' stroke-width='2.500' d='m2 7 3 3 6-7'/%3E%3C/svg%3E"); border-radius: 2px; }
.snapping { margin: 0 5px 0 12px; }
.workspaces { flex: 1; display: flex; align-self: stretch; gap: 57px; padding-left: 30px; margin-left: 179px; border-left: 1px solid #111; }
.workspaces .current { color: #e3cb3c; --icon: #e3cb3c; display: flex; align-items: center; gap: 19px; margin-right: -29px; }
.workspaces svg { width: 12px; height: 12px; }
.more { width: 22px; padding-left: 3px; }
.more svg { width: 13px; height: 11px; }
.sync { margin: 0 14px 0 3px; }
.sync svg { width: 26px; height: 17px; }
.search { display: flex; align-items: center; height: 24px; background: #171717; border: 1px solid #2c2c2c; border-radius: 3px; }
.search svg { width: 20px; height: 20px; margin-left: 9px; }
.search input { flex: 1; min-width: 0; }
.help { width: 243px; margin-right: 7px; gap: 13px; }
.help svg { width: 18px; height: 18px; margin-left: 5px; }
.help input::placeholder { color: #b5b5b5; opacity: 1; }

.workspace { flex: 1; display: flex; min-height: 606px; padding-left: 1px; }
.panel { background: var(--bg); display: flex; flex-direction: column; }
.project { width: 400px; flex: none; margin-right: 6px; margin-bottom: 1px; }
.tabs { display: flex; gap: 46px; height: 32px; padding-left: 14px; }
.tab { height: 32px; padding-top: 4px; }
.tab.on { display: flex; align-items: center; gap: 15px; color: var(--bright); border-bottom: 2px solid #bdbdbd; width: 71px; padding-left: 2px; }
.tab svg, .burger, h2 svg { width: 12px; height: 12px; }
.asset { display: grid; grid-template: 34px 34px 46px / 144px 1fr; column-gap: 6px; padding: 8px 7px 0; height: 143px; color: #a2a2a2; }
.asset p { grid-column: 2; white-space: nowrap; }
.asset-name b { margin-right: 5px; font-weight: 600; }
.small { font-size: 12px; }
.asset .wave { grid-column: 1; grid-row: 3; width: 142px; height: 15px; background: #111; fill: var(--yellow); align-self: center; }
.asset p:last-child { grid-row: 3; align-self: center; }
.project > .search { margin: 0 7px 9px 8px; }
.files { table-layout: fixed; border-collapse: collapse; width: 398px; margin-left: 1px; }
.files th { height: 22px; background: #303030; border-top: 1px solid #111; border-bottom: 2px solid #161616; font-size: 11px; font-weight: 400; color: #a0a0a0; text-align: left; padding: 2px 0 0 6px; white-space: nowrap; }
.files th + th { box-shadow: inset 1px 0 #1c1c1c; }
.files th svg { width: 16px; height: 16px; }
.files th:first-child { padding-left: 26px; }
.sort { display: flex; justify-content: space-between; align-items: center; padding-right: 5px; }
.sort .tri { border-width: 6px 8px 0; border-top-color: var(--yellow); }
.files td { height: 24px; padding: 0 0 0 8px; white-space: nowrap; }
.files td:nth-child(2) { padding-left: 7px; }
.files td:first-child { padding: 0; }
.c-name { width: 147px; } .c-tag { width: 27px; } .c-type { width: 96px; } .c-size { width: 60px; } .c-rate { width: 50px; }
.file { display: flex; align-items: center; gap: 2px; padding-left: 21px; height: 24px; color: #9a9a9a; }
.file .label { padding: 1px 4px; }
.file .doc { width: 18px; height: 19px; }
.file .wide { width: 18px; height: 15px; }
.file.folder { padding-left: 3px; gap: 3px; }
.file.folder .wide { margin-left: 9px; }
.picked td { background: #303030; }
.picked .label { background: #a0a0a0; color: #1c1c1c; font-weight: 500; line-height: 21px; }
.files .flow { padding: 0; background: none; }
.flow svg { width: 18px; height: 18px; }
.project-foot { margin-top: auto; height: 21px; display: flex; align-items: center; border: solid #0c0c0c; border-width: 1px 0; }
.project-foot button { width: 31px; display: grid; place-items: center; }
.project-foot svg { width: 22px; height: 16px; }
.project-foot .bpc { width: 58px; height: 19px; background: #1d1d1d; border: 1px solid #2c2c2c; font-size: 11px; margin-left: 2px; }
.project-foot .pill { width: 51px; height: 18px; border-radius: 9px; background: #353535; margin-left: 2px; }

.viewer { flex: 1; min-width: 0; border: 1px solid #e3cb3c; margin-right: 7px; }
.viewer-tabs { display: flex; align-items: center; height: 34px; padding-left: 11px; }
.viewer-tabs .x { width: 10px; height: 10px; }
.viewer-tabs .chip { margin: 0 14px 2px 10px; }
.viewer-tabs .lock { width: 13px; height: 15px; margin-right: 9px; }
.viewer-tabs .burger { margin-left: 14px; }
.crumbs { display: flex; align-items: center; height: 32px; padding: 0 5px 2px 32px; border-bottom: 1px solid #0c0c0c; }
.crumbs > .chev { margin: 0 5px 0 25px; }
.here { display: flex; align-items: center; gap: 22px; height: 22px; padding: 0 3px 0 12px; margin-right: 12px; background: #191919; color: #e3cb3c; border: 1px solid #2a2a2a; }
.here .chev { border-color: #e3cb3c; }
.renderer { margin-left: auto; }
.renderer button { width: 90px; height: 22px; background: #1d1d1d; border: 1px solid #2c2c2c; border-radius: 2px; }
.stage { flex: 1; display: grid; place-items: center; position: relative; }
.cam { position: absolute; left: 9px; top: 11px; color: #f0f0f0; text-shadow: 1px 0 #5a8fa5; }
.frame { width: 349px; height: 349px; border: 1px solid #8d2a2c; display: grid; place-items: center; }
.inner { width: 301px; height: 301px; border: 1px solid #83508c; }
.viewer-foot { display: flex; align-items: center; height: 27px; padding-left: 1px; border-top: 1px solid #050505; }
.ib { width: 27px; height: 23px; display: grid; place-items: center; flex: none; }
.ib svg { width: 19px; height: 18px; }
.ib.active { background: #171717; }
.ib.faint { --icon: #484848; }
select {
  appearance: none; height: 23px; padding: 0 26px 0 8px; color: var(--bright); border: 1px solid #2c2c2c; border-radius: 3px; min-width: 0; text-overflow: ellipsis;
  background: var(--arrow), #1d1d1d;
}
.w-zoom { width: 86px; margin-right: 3px; } .w-quality { width: 107px; margin: 0 2px; } .w-camera { width: 131px; margin-right: 5px; } .w-view { width: 86px; }
.time { width: 84px; height: 22px; background: #1d1d1d; border: 1px solid #2c2c2c; margin: 0 3px 0 2px; flex: none; }
.viewer-foot .sep { margin: 2px 1px; }
.exposure { color: #d5bd22; margin-left: 2px; }

.side { width: 273px; flex: none; display: flex; }
.stacked { flex: 1; display: flex; flex-direction: column; gap: 3px; background: var(--dark); }
.card { background: var(--bg); }
.card h2 { height: 35px; line-height: 35px; padding: 0 15px; display: flex; justify-content: space-between; align-items: center; }
.card h2.on { color: var(--bright); }
.card.rest { flex: 1; }
.card.tight { margin-top: -2px; }
.card:nth-child(n+4) h2 { line-height: 37px; }
.card .cap { display: block; height: 28px; line-height: 29px; }
.controls .range { margin-top: 4px; }
.transport { display: flex; justify-content: center; height: 38px; padding-right: 10px; border-bottom: 1px solid #303030; margin: 0 8px; gap: 12px; align-items: center; }
.transport svg { width: 18px; height: 15px; }
.controls { padding: 0 7px 8px; }
.controls > select { width: 243px; display: block; }
.line-row { display: flex; align-items: center; }
.line-row #shortcut { width: 210px; margin-right: 6px; }
.include { margin: 7px 0 5px; }
.include span { flex: none; width: 119px; }
.include .ib { margin-right: 3px; }
.include .ib svg { width: 22px; height: 20px; }
.include .out { border-left: 1px solid #191919; margin-right: 0; width: 34px; padding-left: 7px; }
.include .out svg { width: 18px; height: 17px; }
.controls .check { height: 19px; }
.trio { display: grid; grid-template-columns: 81px 53px 92px; column-gap: 6px; margin-bottom: 3px; }
.trio label { line-height: 27px; white-space: nowrap; }
.trio select { width: 100%; }
.trio .split { background: var(--arrow), linear-gradient(#2c2c2c, #2c2c2c) no-repeat right 22px top / 1px 100%, #1a1a1a; padding-right: 22px; }
.stop { border-top: 1px solid #303030; margin-top: 5px; height: 30px; line-height: 32px; }
.controls .stop ~ .check { height: 22px; }
.scroll { width: 13px; margin: 0 1px; flex: none; background: var(--well); }
.scroll i { display: block; height: 468px; border-radius: 7px; background: #333; }

.timeline { display: grid; grid-template-columns: 668px 1fr; background: var(--bg); margin-top: 7px; }
.tl-left { background: linear-gradient(#0a0a0a, #0a0a0a) no-repeat right bottom / 1px 276px; padding-left: 2px; }
.tl-tabs { display: flex; height: 33px; padding-left: 31px; gap: 54px; }
.tl-tab { display: flex; align-items: center; height: 32px; padding-top: 2px; }
.tl-tab .chip { margin: 0 16px 3px 0; }
.tl-tab.on { color: var(--bright); border-bottom: 2px solid #c4c4c4; padding-top: 4px; }
.tl-tab .x { width: 10px; height: 10px; margin-right: 9px; }
.tl-tab .burger { margin-left: 13px; }
.tl-tools { display: flex; height: 45px; }
.clock { width: 111px; margin-right: 21px; text-align: right; line-height: 18px; color: #8f7d1c; font-size: 12px; padding-top: 6px; white-space: nowrap; }
.clock strong { display: block; font-size: 19px; font-weight: 600; color: var(--yellow); }
.tl-tools .search { width: 281px; margin-top: 10px; }
.tl-icons { display: flex; align-items: center; padding: 3px 0 0 10px; }
.tl-icons button { width: 42px; display: grid; place-items: center; }
.tl-icons svg { width: 21px; height: 20px; }
.tl-icons .near { width: 24px; }
.layers { table-layout: fixed; border-collapse: collapse; width: 665px; background: #303030; border-left: 5px solid #282828; }
.layers th { height: 24px; padding: 0; font-size: 11px; font-weight: 400; color: #9c9c9c; text-align: left; border-top: 2px solid #0c0c0c; border-bottom: 1px solid #111; white-space: nowrap; }
.layers svg { width: 17px; height: 16px; }
.layers th.num { padding-left: 5px; }
.layers th.source { padding-left: 6px; }
.layers th.tagcol { padding-left: 21px; }
.layers .parent { padding-left: 14px; }
.layers .parent span { border-left: 1px solid #151515; padding: 3px 0 3px 8px; }
.layers th.div { background: linear-gradient(#151515, #151515) no-repeat 0 4px / 1px 13px; }
.layers td { height: 21px; padding: 0; border-bottom: 1px solid #252525; white-space: nowrap; }
.layers tr:nth-child(3n) td { height: 22px; }
.sw { width: 19px; } .l-chev { width: 26px; } .l-chip { width: 26px; } .l-num { width: 37px; } .l-icon { width: 26px; } .l-name { width: 140px; } .l-link { width: 43px; } .l-parent { width: 111px; }
.box { display: grid; place-items: center; width: 16px; height: 17px; background: #232323; }
.layers .chev { margin-left: 9px; }
.layers .chip { width: 16px; height: 16px; }
.layers .n { padding-left: 2px; font-weight: 600; color: #a4a4a4; }
.layers .name { font-weight: 600; color: #ababab; }
.layers td svg.type { width: 20px; height: 16px; }
.layers .link svg { margin-left: 18px; }
.layers select { display: block; width: 111px; height: 17px; border: 0; border-radius: 0; line-height: 17px; color: #b0b0b0; background-color: #1c1c1c; }
.fx { font: italic 17px/16px "Liberation Serif", serif; color: var(--icon); }

.tl-right { display: flex; min-width: 0; }
.graph { flex: 1; position: relative; min-width: 0; overflow: hidden; }
.navigator { margin-top: 42px; height: 11px; border: solid var(--yellow); border-width: 0 8px; border-radius: 5px; background: var(--bg); }
.navigator i { display: block; height: 11px; background: #696969; margin: 0 1px; }
.scale { position: relative; margin: 0 9px; }
.ruler { height: 25px; font-size: 12px; color: #a5a5a5; }
.ruler span { position: absolute; top: 2px; translate: -50%; margin-left: -2px; }
.ruler b { position: absolute; top: 20px; width: 1px; height: 6px; background: #858585; }
.ruler u { position: absolute; top: 14px; width: 1px; height: 1px; background: #777; }
.strip { height: 20px; background: #484848; border-top: 1px solid #0a0a0a; box-shadow: inset 7px 0 var(--yellow), inset -7px 0 var(--yellow); }
.strip .scale { height: 19px; }
.strip span { position: absolute; top: 1px; height: 15px; width: 30px; padding-left: 8px; background: rgba(196, 196, 196, .72); border: 1px solid #222; border-width: 0 1px 1px 0; color: #111; font-size: 12px; line-height: 14px; text-align: left; }
.strip span.one { width: 22px; }
.strip i { position: absolute; bottom: 0; width: 12px; height: 11px; margin-left: -6px; background: #c0c0c0; clip-path: polygon(50% 0, 100% 45%, 100% 100%, 0 100%, 0 45%); z-index: 1; }
.tracks { margin-top: 4px; border-top: 1px solid #050505; background: #2c2c2c; }
.rows { background: #3c3c3c; }
.row { height: 21px; border-bottom: 1px solid #282828; position: relative; }
.row:nth-child(3n) { height: 22px; }
.clip { position: absolute; top: 0; bottom: 1px; background: var(--shade); border-bottom: 1px solid var(--shade); }
.clip::before { content: ""; position: absolute; inset: 1px 1px 0; background: var(--fill); border-radius: 8px 8px 0 0; }
.c-blue { --fill: #1d5e7c; --shade: #14394a; }
.c-green { --fill: #737854; --shade: #444830; }
.c-purple { --fill: #6e5477; --shade: #5d4566; }
.c-red { --fill: #712a2d; --shade: #5a2426; }
.c-purple::before, .c-red::before { border-radius: 0; }
.scale.head { position: absolute; inset: 42px 0 0; pointer-events: none; }
.playhead { position: absolute; top: 0; bottom: 0; width: 2px; background: linear-gradient(var(--yellow) 11px, transparent 11px 36px, var(--yellow) 36px); }
.playhead::before { content: ""; position: absolute; top: 18px; left: -6px; width: 14px; height: 18px; background: linear-gradient(#222, #222) no-repeat 6px 8px / 2px 10px, var(--yellow); clip-path: polygon(0 0, 100% 0, 100% 55%, 50% 100%, 0 55%); }
.tl-scroll { width: 24px; padding: 79px 0 0 2px; flex: none; }
.tl-scroll button { display: grid; place-items: center; width: 20px; height: 23px; }
.tl-scroll svg { width: 18px; height: 18px; }
.tl-scroll i { display: block; width: 18px; height: 34px; margin-top: 2px; border-radius: 9px; background: #333; }
.tl-foot { grid-column: 1 / -1; display: flex; align-items: center; height: 23px; padding: 0 0 1px 6px; border-top: 1px solid #0c0c0c; }
.tl-foot button { width: 23px; height: 20px; display: grid; place-items: center; }
.tl-foot svg { width: 16px; height: 16px; }
.tl-foot .toggle { width: 167px; margin-left: 258px; border: 1px solid #2c2c2c; border-radius: 3px; background: #202020; }
.zoomer { display: flex; align-items: center; margin-left: 174px; gap: 13px; }
.zoomer .s { width: 13px; height: 7px; }
.zoomer .l { width: 21px; height: 11px; }
.zoomer input { appearance: none; width: 62px; height: 3px; background: #444; }
.zoomer input::-webkit-slider-thumb { appearance: none; width: 13px; height: 13px; border-radius: 50%; border: 3px solid #999; background: #222; }

.taskbar { display: flex; height: 38px; color: #f3e8ea; --icon: #fff; padding-right: 5px; background: linear-gradient(90deg, #451119, #3f1030 17%, #3f0d2a 40%, #3c0b28 72%, #420a1a 84%, #45090f); font: 15px/20px Lato, sans-serif; }
.taskbar button { width: 45px; display: grid; place-items: center; }
.taskbar svg { width: 20px; height: 20px; }
.ring { width: 20px; height: 20px; border: 3px solid #fff; border-radius: 50%; }
.taskbar .app { width: 46px; border-bottom: 3px solid transparent; }
.taskbar button.current { background: #9a1530; border-color: #ff9fb2; margin-left: 4px; }
.taskbar .open { background: linear-gradient(#ff9fb2, #ff9fb2) no-repeat center bottom / 35px 3px; border-bottom: 0; padding-bottom: 1px; }
.taskbar .ae-logo { width: 19px; height: 19px; line-height: 15px; border: 2px solid #b98be0; }
.me-logo { width: 18px; height: 18px; border-radius: 3px; background: #00005b; color: #9d9dff; font: 700 10px/18px "Noto Sans", sans-serif; text-align: center; }
.tray { margin-left: auto; display: flex; align-items: center; gap: 10px; }
.tray .lang { margin-left: 2px; }
.tray time { margin: 0 19px 0 9px; }
.tray .peek { width: 1px; height: 38px; background: #8c5a62; margin-left: 14px; }
```
FILE: timeline.js
```js
const DURATION = 31.7;
const pct = (t) => (t / DURATION * 100).toFixed(3) + '%';
const use = (id, cls = '') => `<svg class="${cls}"><use href="#${id}"/></svg>`;

// Switch codes: E eye, A audio, S shy, / quality, F effects, M motion blur, b empty box, . nothing
const glyph = { E: 'eye', A: 'speaker', S: 'shy', '/': 'slash', M: 'blur' };
const layers = [
  ['What the H....mp3', 'audiofile', 'blue', '.Abb', 'S./...b.', 0, DURATION],
  ['what the hell.mp3', 'bars', 'blue', '...b', 'S./...b.', 0, DURATION],
  ['Pre-comp 9', 'compfile', 'green', 'E.bb', 'Sb/..bbb', 0, DURATION],
  ['Multi.L...rmark.png', 'imagefile', 'purple', 'E.bb', 'S./..bbb', 0, DURATION],
  ['Pre-comp 2', 'compfile', 'green', 'E.bb', 'Sb/F.Mbb', 14.44, 16.08],
  ['Best of...4 Comp 17', 'compfile', 'green', 'Ebbb', 'Sb/F.Mbb', 23.05, 24.82],
  ['Null 9', 'solid', 'red', 'E.bb', 'Sb/..Mbb', 22.48, 23.03],
  ['Millie ....jfif Comp 2', 'compfile', 'green', 'E.bb', 'Sb/..Mbb', 22, 23.03, '7. Null 9'],
  ['Millie ....jfif Comp 3', 'compfile', 'green', 'E.bb', 'Sb/..Mbb', 22.48, 23.03, '7. Null 9'],
  ['Pre-comp 6 Comp 1', 'compfile', 'green', 'Ebbb', 'Sb/..Mbb', 21.5, 22],
];

const cell = (c) => {
  if (c === '.') return '<td></td>';
  const inner = c === 'F' ? '<i class="fx">fx</i>' : glyph[c] ? use(glyph[c]) : '';
  return `<td><span class="box">${inner}</span></td>`;
};

document.getElementById('layers').innerHTML = layers.map(([name, icon, color, av, sw, , , parent], i) =>
  `<tr>${[...av].map(cell).join('')}<td><i class="chev"></i></td><td><i class="chip ${color}"></i></td>
   <td class="n">${i + 1}</td><td>${use(icon, 'type')}</td><td class="name">${name}</td>${[...sw].map(cell).join('')}
   <td class="link">${use('spiral')}</td><td><select aria-label="Parent of ${name}"><option>${parent || 'None'}</option></select></td><td></td></tr>`).join('');

document.getElementById('tracks').innerHTML = layers.map(([, , color, , , from, to]) =>
  `<div class="row"><i class="clip c-${color}" style="left:${pct(from)};width:${pct(to - from)}"></i></div>`).join('');

const markers = [[1, .31], [2, 3.77], [3, 4.58], [4, 5.47], [5, 6.28], [6, 7.12], [7, 7.99], [8, 8.83], [9, 9.82],
  [10, 10.51], [11, 10.89], [12, 11.27], [13, 11.81], [14, 12.18], [15, 12.88], [16, 13.46], [17, 14.59], [18, 15.95],
  [19, 16.41], [20, 16.95], [21, 17.2], [36, 17.79], [22, 18.08], [23, 18.52], [24, 19.02], [25, 19.51], [26, 20.04],
  [27, 20.43], [28, 21], [29, 21.54], [30, 22.52], [31, 23.09], [32, 23.63], [33, 24.06], [35, 24.47], [34, 24.85]];
document.getElementById('markers').innerHTML = markers.map(([n, t]) =>
  `<span class="${n < 10 ? 'one' : ''}" style="left:${pct(t)}">${n}</span><i style="left:${pct(t)}"></i>`).join('');

let ruler = '';
for (let s = 0; s <= 30; s += 2) {
  const text = s ? String(s).padStart(2, '0') + 's' : '0:00s';
  ruler += `<span style="left:${pct(s)}">${text}</span><b style="left:${pct(s)}"></b>`;
  if (s > 2) ruler += `<u style="left:${pct(s + .6)}"></u>`;
}
document.getElementById('ruler').innerHTML = ruler + `<span style="left:${pct(31.9)}">3</span>`;
document.querySelector('.playhead').style.left = pct(2.45);

// Audio thumbnail outline
let wave = '';
for (let x = 1; x < 143; x += 1) {
  const h = 1.5 + Math.abs(Math.sin(x * .13) * 2.6 + Math.sin(x * 1.9) * 2.2);
  wave += `M${x} ${7.5 - h}h1v${h * 2}h-1z`;
}
document.getElementById('wave').setAttribute('d', wave);
```
